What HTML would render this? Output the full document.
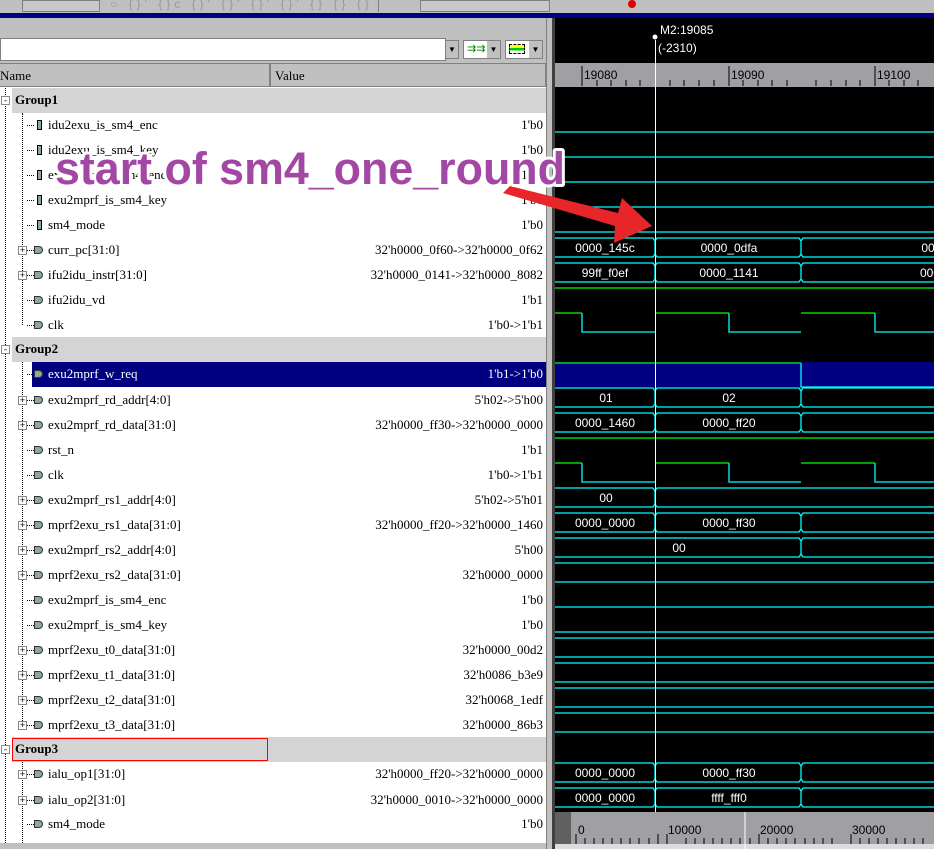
<!DOCTYPE html>
<html><head><meta charset="utf-8"><style>
*{margin:0;padding:0;box-sizing:border-box}
body{width:934px;height:849px;overflow:hidden;background:#c0c0c0;position:relative;font-family:"Liberation Serif",serif;font-size:13px}
.a{position:absolute}
.row{position:absolute;left:0;width:546px;height:25px;background:#fff}
.nm{position:absolute;left:48px;top:4px;white-space:nowrap;color:#000}
.vl{position:absolute;right:3px;top:4px;white-space:nowrap;color:#000}
.grp{position:absolute;left:12px;width:534px;height:25px;background:#d4d4d4}
.grp span{position:absolute;left:3px;top:4px;font-weight:bold}
.ic{position:absolute;left:37px;top:7px;width:5px;height:10px;border:1px solid #000;background:#8fa89a}
.bi{position:absolute;left:34px;top:8px;width:9px;height:8px;background:#8fa89a;border:1px solid #333;border-radius:0 4px 4px 0}
.pl{position:absolute;left:18px;top:8px;width:9px;height:9px;border:1px solid #888;background:#fff;font-size:9px;line-height:7px;text-align:center;color:#000;font-family:"Liberation Sans",sans-serif;z-index:2}
.dh{position:absolute;left:27px;top:12px;width:7px;border-top:1px dotted #000}
.vd{position:absolute;width:1px;border-left:1px dotted #000;z-index:1}
</style></head><body>
<!-- toolbar -->
<div class="a" style="left:0;top:0;width:934px;height:13px;background:#c0c0c0"></div>
<div class="a" style="left:22px;top:0;width:78px;height:12px;background:#c8c8c8;border:1px solid #808080"></div>
<div class="a" style="left:110px;top:-3px;font-size:12px;color:#999;letter-spacing:4px;font-family:'Liberation Sans',sans-serif">○ {}' {}c {}' {}' {}' {}' {} {} {} {}' ●</div>
<div class="a" style="left:378px;top:0;width:552px;height:12px;border-left:1px solid #808080;background:#c0c0c0"></div>
<div class="a" style="left:420px;top:0;width:130px;height:12px;background:#c8c8c8;border:1px solid #808080"></div>
<div class="a" style="left:628px;top:0;width:8px;height:8px;background:#d00;border-radius:4px"></div>
<div class="a" style="left:0;top:13px;width:934px;height:5px;background:#000080"></div>
<!-- left top -->
<div class="a" style="left:0;top:38px;width:446px;height:23px;background:#fff;border:1px solid #808080"></div>
<div class="a" style="left:445px;top:40px;width:14px;height:19px;background:#c0c0c0;border:1px solid #808080;font-size:8px;text-align:center;line-height:17px">▼</div>
<div class="a" style="left:463px;top:40px;width:38px;height:19px;background:#fff;border:1px solid #808080"></div>
<div class="a" style="left:467px;top:42px;color:#080;font-size:11px;font-family:'Liberation Sans',sans-serif">⇉⇉</div>
<div class="a" style="left:487px;top:41px;width:13px;height:17px;background:#c0c0c0;font-size:8px;text-align:center;line-height:17px">▼</div>
<div class="a" style="left:505px;top:40px;width:38px;height:19px;background:#fff;border:1px solid #808080"></div>
<div class="a" style="left:509px;top:44px;width:16px;height:10px;border:1px dashed #000;background:linear-gradient(#ff0 0 40%,#0c0 40% 70%,#fff 70%)"></div>
<div class="a" style="left:529px;top:41px;width:13px;height:17px;background:#c0c0c0;font-size:8px;text-align:center;line-height:17px">▼</div>
<div class="a" style="left:0;top:63px;width:270px;height:24px;background:#c0c0c0;border:1px solid #808080;border-left:none"><span class="a" style="left:0;top:4px">Name</span></div>
<div class="a" style="left:270px;top:63px;width:276px;height:24px;background:#c0c0c0;border:1px solid #808080"><span class="a" style="left:4px;top:4px">Value</span></div>
<!-- rows -->
<div class="a" style="left:0;top:87px;width:546px;height:762px;background:#fff"></div>

<div class="grp" style="top:88px"><span>Group1</span></div>
<div class="row" style="top:113px"><div class="dh"></div><div class="ic"></div><span class="nm">idu2exu_is_sm4_enc</span><span class="vl">1'b0</span></div>
<div class="row" style="top:138px"><div class="dh"></div><div class="ic"></div><span class="nm">idu2exu_is_sm4_key</span><span class="vl">1'b0</span></div>
<div class="row" style="top:163px"><div class="dh"></div><div class="ic"></div><span class="nm">exu2mprf_is_sm4_enc</span><span class="vl">1'b0</span></div>
<div class="row" style="top:188px"><div class="dh"></div><div class="ic"></div><span class="nm">exu2mprf_is_sm4_key</span><span class="vl">1'b0</span></div>
<div class="row" style="top:213px"><div class="dh"></div><div class="ic"></div><span class="nm">sm4_mode</span><span class="vl">1'b0</span></div>
<div class="row" style="top:238px"><div class="pl">+</div><div class="dh"></div><div class="bi"></div><span class="nm">curr_pc[31:0]</span><span class="vl">32'h0000_0f60-&gt;32'h0000_0f62</span></div>
<div class="row" style="top:263px"><div class="pl">+</div><div class="dh"></div><div class="bi"></div><span class="nm">ifu2idu_instr[31:0]</span><span class="vl">32'h0000_0141-&gt;32'h0000_8082</span></div>
<div class="row" style="top:288px"><div class="dh"></div><div class="bi"></div><span class="nm">ifu2idu_vd</span><span class="vl">1'b1</span></div>
<div class="row" style="top:313px"><div class="dh"></div><div class="bi"></div><span class="nm">clk</span><span class="vl">1'b0-&gt;1'b1</span></div>
<div class="grp" style="top:337px"><span>Group2</span></div>
<div class="row" style="top:362px"><div class="dh"></div><div class="a" style="left:32px;top:0;width:514px;height:25px;background:#000080"></div><div class="bi"></div><span class="nm" style="color:#fff">exu2mprf_w_req</span><span class="vl" style="color:#fff">1'b1-&gt;1'b0</span></div>
<div class="row" style="top:388px"><div class="pl">+</div><div class="dh"></div><div class="bi"></div><span class="nm">exu2mprf_rd_addr[4:0]</span><span class="vl">5'h02-&gt;5'h00</span></div>
<div class="row" style="top:413px"><div class="pl">+</div><div class="dh"></div><div class="bi"></div><span class="nm">exu2mprf_rd_data[31:0]</span><span class="vl">32'h0000_ff30-&gt;32'h0000_0000</span></div>
<div class="row" style="top:438px"><div class="dh"></div><div class="bi"></div><span class="nm">rst_n</span><span class="vl">1'b1</span></div>
<div class="row" style="top:463px"><div class="dh"></div><div class="bi"></div><span class="nm">clk</span><span class="vl">1'b0-&gt;1'b1</span></div>
<div class="row" style="top:488px"><div class="pl">+</div><div class="dh"></div><div class="bi"></div><span class="nm">exu2mprf_rs1_addr[4:0]</span><span class="vl">5'h02-&gt;5'h01</span></div>
<div class="row" style="top:513px"><div class="pl">+</div><div class="dh"></div><div class="bi"></div><span class="nm">mprf2exu_rs1_data[31:0]</span><span class="vl">32'h0000_ff20-&gt;32'h0000_1460</span></div>
<div class="row" style="top:538px"><div class="pl">+</div><div class="dh"></div><div class="bi"></div><span class="nm">exu2mprf_rs2_addr[4:0]</span><span class="vl">5'h00</span></div>
<div class="row" style="top:563px"><div class="pl">+</div><div class="dh"></div><div class="bi"></div><span class="nm">mprf2exu_rs2_data[31:0]</span><span class="vl">32'h0000_0000</span></div>
<div class="row" style="top:588px"><div class="dh"></div><div class="bi"></div><span class="nm">exu2mprf_is_sm4_enc</span><span class="vl">1'b0</span></div>
<div class="row" style="top:613px"><div class="dh"></div><div class="bi"></div><span class="nm">exu2mprf_is_sm4_key</span><span class="vl">1'b0</span></div>
<div class="row" style="top:638px"><div class="pl">+</div><div class="dh"></div><div class="bi"></div><span class="nm">mprf2exu_t0_data[31:0]</span><span class="vl">32'h0000_00d2</span></div>
<div class="row" style="top:663px"><div class="pl">+</div><div class="dh"></div><div class="bi"></div><span class="nm">mprf2exu_t1_data[31:0]</span><span class="vl">32'h0086_b3e9</span></div>
<div class="row" style="top:688px"><div class="pl">+</div><div class="dh"></div><div class="bi"></div><span class="nm">mprf2exu_t2_data[31:0]</span><span class="vl">32'h0068_1edf</span></div>
<div class="row" style="top:713px"><div class="pl">+</div><div class="dh"></div><div class="bi"></div><span class="nm">mprf2exu_t3_data[31:0]</span><span class="vl">32'h0000_86b3</span></div>
<div class="grp" style="top:737px"><span>Group3</span></div>
<div class="a" style="left:12px;top:738px;width:256px;height:23px;border:1px solid #f00"></div>
<div class="row" style="top:762px"><div class="pl">+</div><div class="dh"></div><div class="bi"></div><span class="nm">ialu_op1[31:0]</span><span class="vl">32'h0000_ff20-&gt;32'h0000_0000</span></div>
<div class="row" style="top:788px"><div class="pl">+</div><div class="dh"></div><div class="bi"></div><span class="nm">ialu_op2[31:0]</span><span class="vl">32'h0000_0010-&gt;32'h0000_0000</span></div>
<div class="row" style="top:812px"><div class="dh"></div><div class="bi"></div><span class="nm">sm4_mode</span><span class="vl">1'b0</span></div>
<div class="a" style="left:0;top:843px;width:546px;height:6px;background:#c0c0c0"></div>
<!-- tree lines -->
<div class="vd" style="left:22px;top:113px;height:212px"></div>
<div class="vd" style="left:22px;top:362px;height:363px"></div>
<div class="vd" style="left:22px;top:762px;height:81px"></div>
<div class="vd" style="left:5px;top:88px;height:755px"></div>
<div class="a" style="left:1px;top:96px;width:9px;height:9px;border:1px solid #888;background:#fff;z-index:2;font-size:9px;line-height:6px;text-align:center">-</div>
<div class="a" style="left:1px;top:345px;width:9px;height:9px;border:1px solid #888;background:#fff;z-index:2;font-size:9px;line-height:6px;text-align:center">-</div>
<div class="a" style="left:1px;top:745px;width:9px;height:9px;border:1px solid #888;background:#fff;z-index:2;font-size:9px;line-height:6px;text-align:center">-</div>
<!-- divider -->
<div class="a" style="left:546px;top:18px;width:6px;height:831px;background:#c0c0c0;border-left:1px solid #808080"></div>
<div class="a" style="left:552px;top:18px;width:3px;height:831px;background:#404040"></div>
<!-- wave panel -->
<div class="a" style="left:555px;top:18px;width:379px;height:831px;background:#000"></div>
<div class="a" style="left:555px;top:63px;width:379px;height:24px;background:#a0a0a4"></div>
<div class="a" style="left:555px;top:812px;width:379px;height:32px;background:#a0a0a4"></div>
<div class="a" style="left:555px;top:812px;width:16px;height:32px;background:#606060"></div>
<div class="a" style="left:555px;top:844px;width:379px;height:5px;background:#ddd"></div>
<div class="a" style="left:555px;top:362px;width:379px;height:25px;background:#000080"></div>
<svg class="a" style="left:0;top:0;z-index:3" width="934" height="849" xmlns="http://www.w3.org/2000/svg" font-family="Liberation Sans, sans-serif">
<g stroke="#000" stroke-width="1">
<path d="M582 66v20M729 66v20M875 66v20M597 80v6M611 80v6M626 80v6M640 80v6M670 80v6M684 80v6M699 80v6M714 80v6M743 80v6M758 80v6M772 80v6M787 80v6M816 80v6M831 80v6M846 80v6M860 80v6M889 80v6M904 80v6M918 80v6"/>
<path d="M576 834v10M667 834v10M759 834v10M851 834v10M585 838v6M594 838v6M603 838v6M612 838v6M621 838v6M630 838v6M639 838v6M649 838v6M658 834v10M686 838v6M695 838v6M704 838v6M713 838v6M722 838v6M731 838v6M740 838v6M750 838v6M768 838v6M777 838v6M786 838v6M795 838v6M805 838v6M814 838v6M823 838v6M832 838v6M860 838v6M869 838v6M878 838v6M887 838v6M896 838v6M905 838v6M914 838v6M923 838v6"/>
</g>
<line x1="745" y1="812" x2="745" y2="849" stroke="#fff"/>
<g font-size="12" fill="#000"><text x="584" y="79">19080</text><text x="731" y="79">19090</text><text x="877" y="79">19100</text>
<text x="578" y="834">0</text><text x="668" y="834">10000</text><text x="760" y="834">20000</text><text x="852" y="834">30000</text></g>
<g font-size="12" fill="#fff"><text x="660" y="34">M2:19085</text><text x="658" y="52">(-2310)</text></g>
<circle cx="655" cy="37" r="2.5" fill="#fff"/>
<g fill="none" stroke="#0ff" stroke-width="1.3">
<path d="M555 132H934M555 157H934M555 182H934M555 207H934M555 232H934"/>
<path d="M555 238H653l2 3 2-3H799l2 3 2-3H934M555 257H653l2-3 2 3H799l2-3 2 3H934M655 241v13M801 241v13"/>
<path d="M555 263H653l2 3 2-3H799l2 3 2-3H934M555 282H653l2-3 2 3H799l2-3 2 3H934M655 266v13M801 266v13"/>
<path d="M582 313v19H655M729 313v19H801M875 313v19H934"/>
<path d="M801 363v24H934"/>
<path d="M555 388H653l2 3 2-3H799l2 3 2-3H934M555 407H653l2-3 2 3H799l2-3 2 3H934M655 391v13M801 391v13"/>
<path d="M555 413H653l2 3 2-3H799l2 3 2-3H934M555 432H653l2-3 2 3H799l2-3 2 3H934M655 416v13M801 416v13"/>
<path d="M582 463v19H655M729 463v19H801M875 463v19H934"/>
<path d="M555 488H653l2 3 2-3H934M555 507H653l2-3 2 3H934M655 491v13"/>
<path d="M555 513H653l2 3 2-3H799l2 3 2-3H934M555 532H653l2-3 2 3H799l2-3 2 3H934M655 516v13M801 516v13"/>
<path d="M555 538H799l2 3 2-3H934M555 557H799l2-3 2 3H934M801 541v13"/>
<path d="M555 563H934M555 582H934M555 607H934M555 632H934M555 638H934M555 657H934M555 663H934M555 682H934M555 688H934M555 707H934M555 713H934M555 732H934"/>
<path d="M555 763H653l2 3 2-3H799l2 3 2-3H934M555 782H653l2-3 2 3H799l2-3 2 3H934M655 766v13M801 766v13"/>
<path d="M555 788H653l2 3 2-3H799l2 3 2-3H934M555 807H653l2-3 2 3H799l2-3 2 3H934M655 791v13M801 791v13"/>
</g>
<g fill="none" stroke="#0f0" stroke-width="1.3">
<path d="M555 288H934M555 438H934"/>
<path d="M555 313H582M655 313H729M801 313H875"/>
<path d="M555 463H582M655 463H729M801 463H875"/>
<path d="M555 363H801"/>
</g>
<line x1="655.5" y1="40" x2="655.5" y2="812" stroke="#fff"/>
<g font-size="12" fill="#fff" text-anchor="middle">
<text x="605" y="252">0000_145c</text><text x="729" y="252">0000_0dfa</text><text x="928" y="252">00</text>
<text x="605" y="277">99ff_f0ef</text><text x="729" y="277">0000_1141</text><text x="930" y="277">000</text>
<text x="606" y="402">01</text><text x="729" y="402">02</text>
<text x="605" y="427">0000_1460</text><text x="729" y="427">0000_ff20</text>
<text x="606" y="502">00</text>
<text x="605" y="527">0000_0000</text><text x="729" y="527">0000_ff30</text>
<text x="679" y="552">00</text>
<text x="605" y="777">0000_0000</text><text x="729" y="777">0000_ff30</text>
<text x="605" y="802">0000_0000</text><text x="729" y="802">ffff_fff0</text>
</g>
<polygon points="503,193 510,186 618,213 622,198 652,226 614,243 615,226" fill="#e8262a"/>
<text x="55" y="184" font-family="Liberation Sans, sans-serif" font-weight="bold" font-size="45" fill="#a347a5" stroke="#fff" stroke-width="6" paint-order="stroke" stroke-linejoin="round" textLength="510" lengthAdjust="spacingAndGlyphs">start of sm4_one_round</text>
</svg>
</body></html>
